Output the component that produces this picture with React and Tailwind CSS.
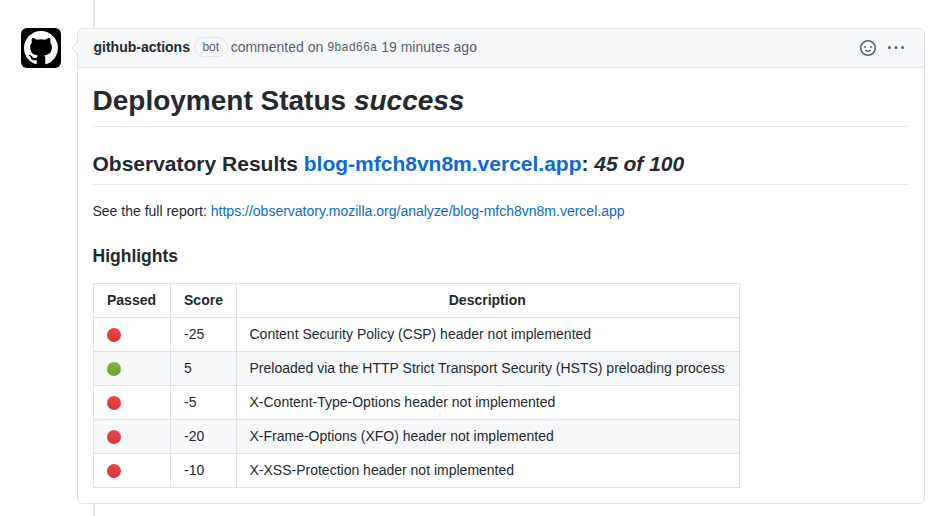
const rows = [
  { ok: false, score: '-25', text: 'Content Security Policy (CSP) header not implemented' },
  { ok: true, score: '5', text: 'Preloaded via the HTTP Strict Transport Security (HSTS) preloading process' },
  { ok: false, score: '-5', text: 'X-Content-Type-Options header not implemented' },
  { ok: false, score: '-20', text: 'X-Frame-Options (XFO) header not implemented' },
  { ok: false, score: '-10', text: 'X-XSS-Protection header not implemented' },
];

function Dot({ ok }) {
  return (
    <span
      className={
        ok
          ? 'block w-[14px] h-[14px] rounded-full bg-[linear-gradient(#83b14c,#6f9e3b)]'
          : 'block w-[14px] h-[14px] rounded-full bg-[linear-gradient(#ec4548,#d9363c)]'
      }
    />
  );
}

function GithubMark() {
  return (
    <svg viewBox="0 0 16 16" className="w-[34px] h-[34px]" fill="#fff">
      <path d="M8 0C3.58 0 0 3.58 0 8c0 3.54 2.29 6.53 5.47 7.59.4.07.55-.17.55-.38 0-.19-.01-.82-.01-1.49-2.01.37-2.53-.49-2.69-.94-.09-.23-.48-.94-.82-1.13-.28-.15-.68-.52-.01-.53.63-.01 1.08.58 1.23.82.72 1.21 1.87.87 2.33.66.07-.52.28-.87.51-1.07-1.78-.2-3.64-.89-3.64-3.95 0-.87.31-1.59.82-2.15-.08-.2-.36-1.02.08-2.12 0 0 .67-.21 2.2.82.64-.18 1.32-.27 2-.27.68 0 1.36.09 2 .27 1.53-1.04 2.2-.82 2.2-.82.44 1.1.16 1.92.08 2.12.51.56.82 1.27.82 2.15 0 3.07-1.87 3.75-3.65 3.95.29.25.54.73.54 1.48 0 1.07-.01 1.93-.01 2.2 0 .21.15.46.55.38A8.013 8.013 0 0016 8c0-4.42-3.58-8-8-8z" />
    </svg>
  );
}

function Smiley() {
  return (
    <svg viewBox="0 0 16 16" className="w-4 h-4" fill="#57606a">
      <path d="M8 0a8 8 0 1 1 0 16A8 8 0 0 1 8 0ZM1.5 8a6.5 6.5 0 1 0 13 0 6.5 6.5 0 0 0-13 0Zm3.82 1.636a.75.75 0 0 1 1.038.175l.007.009c.103.118.22.222.35.31.264.178.683.37 1.285.37.602 0 1.02-.192 1.285-.371.13-.088.247-.192.35-.31l.007-.008a.75.75 0 0 1 1.222.87l-.022-.015c.02.013.021.015.021.015v.001l-.001.002-.002.003-.005.007-.014.019a2.066 2.066 0 0 1-.184.213c-.16.166-.338.316-.53.445-.63.418-1.37.638-2.127.629-.946 0-1.652-.308-2.126-.63a3.331 3.331 0 0 1-.715-.657l-.014-.02-.005-.006-.002-.003v-.002h-.001l.613-.432-.614.43a.75.75 0 0 1 .183-1.044ZM12 7a1 1 0 1 1-2 0 1 1 0 0 1 2 0ZM5 8a1 1 0 1 1 0-2 1 1 0 0 1 0 2Z" />
    </svg>
  );
}

function Kebab() {
  return (
    <svg viewBox="0 0 16 16" className="w-4 h-4" fill="#57606a">
      <path d="M8 9a1.5 1.5 0 1 0 0-3 1.5 1.5 0 0 0 0 3ZM1.5 9a1.5 1.5 0 1 0 0-3 1.5 1.5 0 0 0 0 3Zm13 0a1.5 1.5 0 1 0 0-3 1.5 1.5 0 0 0 0 3Z" />
    </svg>
  );
}

export default function App() {
  return (
    <div className="relative h-[516px] overflow-hidden bg-white font-['Liberation_Sans',Arial,sans-serif] text-[14px] leading-[21px] text-[#24292f]">
      <div className="absolute left-[93px] top-0 bottom-0 w-[2px] bg-[#e9ebef]" />
      <div className="relative flex pt-[28px] pl-[21px] pr-[11px]">
        <div className="flex items-center justify-center w-[40px] h-[40px] mr-[16px] shrink-0 rounded-[6px] bg-black">
          <GithubMark />
        </div>
        <div className="relative flex-1 h-[476px] rounded-[6px] border border-[#dfe2e6] bg-white">
          <div className="relative flex items-center justify-between h-[39px] pl-[15px] pr-[20px] rounded-t-[6px] border-b border-[#dfe2e6] bg-[#f6f8fa] text-[#57606a]">
            <div className="flex items-center whitespace-nowrap pb-[2px] pl-[0.5px]">
              <span className="font-bold text-[#24292f]">github-actions</span>
              <span className="ml-[4px] px-[7.5px] h-[20px] flex items-center rounded-full border border-[#e3e5e8] text-[12px]">bot</span>
              <span className="ml-[3px]">commented on</span>
              <span className="ml-[4px] pt-[2px] font-['Liberation_Mono',monospace] text-[11.9px]">9bad66a</span>
              <span className="ml-[4px]">19 minutes ago</span>
            </div>
            <div className="flex items-center gap-[12px]">
              <Smiley />
              <Kebab />
            </div>
          </div>
          <div className="absolute left-[-5px] top-[14px] w-[10px] h-[10px] rotate-45 border-l border-b border-[#dfe2e6] bg-[#f6f8fa]" />
          <div className="px-[15px]">
            <h1 className="-ml-[0.5px] mt-[15px] pb-[8px] border-b border-[#e7e9ec] text-[28px] leading-[35px] font-bold">
              Deployment Status <em>success</em>
            </h1>
            <h2 className="-ml-[0.5px] mt-[24px] pb-[7px] border-b border-[#e7e9ec] text-[21px] leading-[26px] font-bold">
              Observatory Results <a className="text-[#0969da]">blog-mfch8vn8m.vercel.app</a>: <em>45 of 100</em>
            </h2>
            <p className="-ml-[0.5px] mt-[16px]">
              See the full report: <a className="text-[#0969da]">https://observatory.mozilla.org/analyze/blog-mfch8vn8m.vercel.app</a>
            </p>
            <h3 className="-ml-[0.5px] mt-[23px] text-[17.5px] leading-[22px] font-bold">Highlights</h3>
            <table className="mt-[16px] w-[647px] border-collapse">
              <thead>
                <tr className="h-[34px]">
                  <th className="w-[77px] pl-[12.5px] pr-[13.5px] border border-[#dfe2e6] font-bold text-center">Passed</th>
                  <th className="w-[66px] px-[13px] border border-[#dfe2e6] font-bold text-center">Score</th>
                  <th className="pl-[12.5px] pr-[14px] border border-[#dfe2e6] font-bold text-center">Description</th>
                </tr>
              </thead>
              <tbody>
                {rows.map((r, i) => (
                  <tr key={i} className={i % 2 === 1 ? 'h-[34px] bg-[#f6f8fa]' : 'h-[34px]'}>
                    <td className="px-[13px] border border-[#dfe2e6]"><Dot ok={r.ok} /></td>
                    <td className="px-[13px] border border-[#dfe2e6]">{r.score}</td>
                    <td className="pl-[12.5px] pr-[13px] border border-[#dfe2e6]">{r.text}</td>
                  </tr>
                ))}
              </tbody>
            </table>
          </div>
        </div>
      </div>
    </div>
  );
}
